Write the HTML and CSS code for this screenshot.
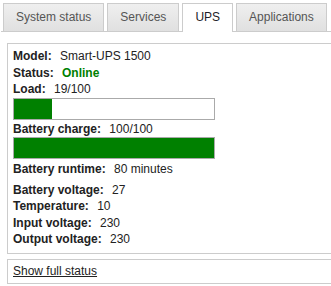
FILE: index.html
```html
<!DOCTYPE html>
<html lang="en">
<head>
    <meta charset="UTF-8">
    <meta name="viewport" content="width=device-width, initial-scale=1.0">
    <title>UPS</title>
    <link rel="stylesheet" href="styles.css">
</head>
<body>
    <ul class="tabs">
        <li class="tab">System status</li>
        <li class="tab">Services</li>
        <li class="tab active">UPS</li>
        <li class="tab">Applications</li>
    </ul>

    <div class="panel">
        <div class="row"><span class="label">Model:</span> Smart-UPS 1500</div>
        <div class="row"><span class="label">Status:</span> <span class="online">Online</span></div>
        <div class="row"><span class="label">Load:</span> 19/100</div>
        <div class="bar"><div class="fill" style="width: 19%"></div></div>
        <div class="row"><span class="label">Battery charge:</span> 100/100</div>
        <div class="bar"><div class="fill" style="width: 100%"></div></div>
        <div class="row runtime"><span class="label">Battery runtime:</span> 80 minutes</div>
        <div class="row"><span class="label">Battery voltage:</span> 27</div>
        <div class="row"><span class="label">Temperature:</span> 10</div>
        <div class="row"><span class="label">Input voltage:</span> 230</div>
        <div class="row"><span class="label">Output voltage:</span> 230</div>
    </div>

    <div class="panel footer">
        <a href="#" class="full-status">Show full status</a>
    </div>
</body>
</html>
```

FILE: styles.css
```css
html, body {
    overflow: hidden;
}
body {
    margin: 0;
    font-family: "Liberation Sans", Arial, sans-serif;
    font-size: 12px;
    color: #222;
    background-color: #fff;
}
.tabs {
    display: flex;
    gap: 3px;
    list-style: none;
    margin: 0 0 0 1px;
    padding: 3px 0 0 2px;
    border-bottom: 1px solid #ccc;
}
.tab {
    height: 27px;
    line-height: 27px;
    padding: 0 12px;
    border: 1px solid #ccc;
    border-bottom: none;
    background: linear-gradient(#efefef, #e0e0e0);
    color: #555;
}
.tab.active {
    height: 28px;
    margin-bottom: -1px;
    background: #fff;
    color: #1c1c28;
}
.panel {
    margin: 11px -12px 0 7px;
    padding: 4px 5px 5px;
    border: 1px solid #ccc;
    line-height: 16.5px;
}
.label {
    font-weight: bold;
    margin-right: 5px;
}
.online {
    font-weight: bold;
    color: #008000;
}
.bar {
    width: 200px;
    height: 20px;
    margin-bottom: 1px;
    border: 1px solid #aaa;
    background-color: #fff;
}
.fill {
    height: 100%;
    background-color: #008000;
}
.runtime {
    margin-top: 2px;
    margin-bottom: 4px;
}
.footer {
    margin-top: 5px;
    padding: 3px 5px 4px;
}
.full-status {
    color: #222;
}
```
